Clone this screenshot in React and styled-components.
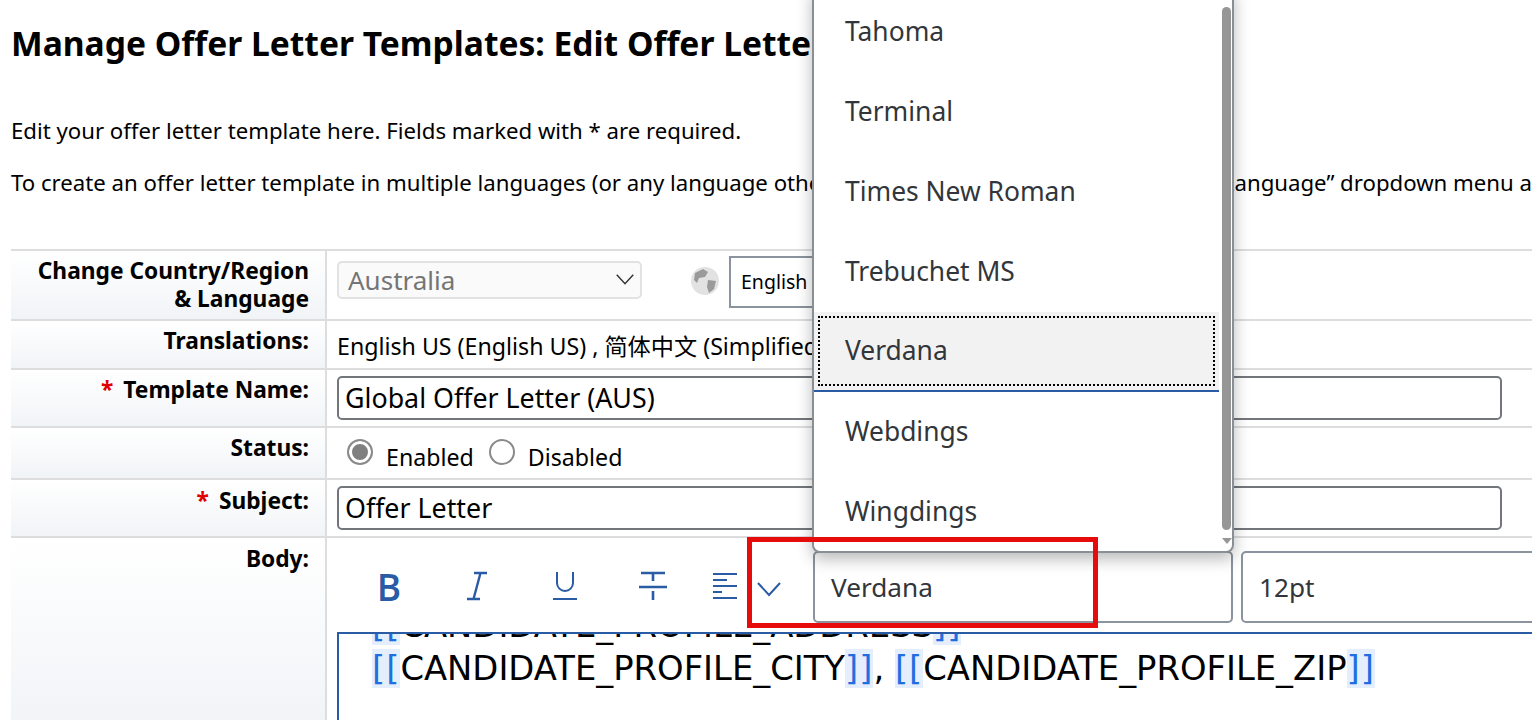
import React from "react";
import styled, { createGlobalStyle } from "styled-components";

const Colors = {
  BLUE: "#2a5ba5",
  LINE: "#dddddd",
  FIELD: "#73777c",
  TEXT: "#32363a",
};

const GlobalStyle = createGlobalStyle`
  html, body { margin: 0; padding: 0; background: #fff; }
  body { font-family: "Noto Sans", "Noto Sans CJK SC", sans-serif; color: #000; }
`;

const Page = styled.div`
  position: relative;
  width: 1532px;
  height: 720px;
  overflow: hidden;
  padding: 0 0 0 11px;
  box-sizing: border-box;
`;

const Title = styled.h1`
  margin: 0;
  padding-top: 21px;
  font-size: 33.6px;
  line-height: 44px;
  font-weight: 700;
  white-space: nowrap;
`;

const Intro = styled.div`
  display: flex;
  justify-content: space-between;
  margin-top: ${(p) => p.$top}px;
  font-size: 22.2px;
  line-height: 30px;
  white-space: nowrap;
`;

const Table = styled.div`
  margin-top: 51px;
  width: 1521px;
`;

const Row = styled.div`
  display: flex;
  height: ${(p) => p.$height}px;
  border-top: 2px solid ${Colors.LINE};
  box-sizing: border-box;
`;

const Label = styled.div`
  flex: 0 0 316px;
  box-sizing: border-box;
  padding: ${(p) => p.$top ?? 5}px 16px 0 0;
  text-align: right;
  font-size: 22.75px;
  line-height: 28px;
  font-weight: 700;
  background: linear-gradient(#fff, #f1f4f7);
  border-right: 2px solid ${Colors.LINE};
`;

const Star = styled.span`
  color: #e00000;
  margin-right: 10px;
`;

const Cell = styled.div`
  flex: 1;
  min-width: 0;
  display: flex;
  align-items: center;
  padding-left: 10px;
  font-size: 23.2px;
  white-space: nowrap;
  overflow: hidden;
`;

const CountrySelect = styled.div`
  width: 305px;
  height: 38px;
  margin-bottom: 11px;
  box-sizing: border-box;
  display: flex;
  align-items: center;
  justify-content: space-between;
  padding: 0 6px 0 9px;
  font-size: 26px;
  color: #757575;
  background: #fafafa;
  border: 2px solid #e2e2e2;
  border-radius: 5px;
`;

const Globe = styled.svg`
  margin: 0 8px 9px 47px;
  flex: none;
`;

const LangSelect = styled.div`
  flex: none;
  width: 300px;
  height: 52px;
  margin-bottom: 7px;
  box-sizing: border-box;
  border: 2px solid #8b939e;
  padding: 0 10px;
  display: flex;
  align-items: center;
  font-size: 19.5px;
`;

const Input = styled.div`
  width: 1165px;
  height: 44px;
  box-sizing: border-box;
  border: 2px solid ${Colors.FIELD};
  border-radius: 5px;
  padding: 0 6px;
  font-size: 26.8px;
  line-height: 40px;
`;

const Radio = styled.span`
  flex: none;
  width: 26px;
  height: 26px;
  box-sizing: border-box;
  border: 2px solid #8a8a8a;
  border-radius: 50%;
  margin: -2px 13px 0 ${(p) => p.$left}px;
  background: ${(p) => (p.$checked ? "#808080" : "#fff")};
  box-shadow: ${(p) => (p.$checked ? "inset 0 0 0 3px #fff" : "none")};
`;

const RadioText = styled.span`
  padding-top: 8px;
`;

const BodyCell = styled.div`
  flex: 1;
  min-width: 0;
  padding-left: 10px;
`;

const Toolbar = styled.div`
  display: flex;
  height: 92px;
  box-sizing: border-box;
  padding-top: 13px;
`;

const Tool = styled.span`
  flex: none;
  width: ${(p) => p.$width}px;
  height: 70px;
  margin-right: ${(p) => p.$gap || 0}px;
  display: flex;
  align-items: center;
  justify-content: center;
  color: ${Colors.BLUE};
`;

const BoldGlyph = styled.span`
  font-size: 37px;
  line-height: 1;
  font-weight: 600;
  font-family: "Open Sans", sans-serif;
`;

const ChevronWrap = styled.span`
  flex: none;
  padding-top: 12px;
`;

const FontSelect = styled.div`
  flex: none;
  width: ${(p) => p.$width}px;
  height: 72px;
  margin-right: 8px;
  box-sizing: border-box;
  display: flex;
  align-items: center;
  padding-left: 16px;
  font-size: 26.2px;
  color: ${Colors.TEXT};
  border: 2px solid #8b939e;
  border-radius: 5px;
`;

const Editor = styled.div`
  height: 100px;
  margin-top: 2px;
  overflow: hidden;
  box-sizing: border-box;
  border-top: 2px solid ${Colors.BLUE};
  border-left: 2px solid ${Colors.BLUE};
  padding-left: 33px;
  font-family: "DejaVu Sans", sans-serif;
  font-size: 33.8px;
  line-height: 43px;
  white-space: nowrap;
`;

const EditorLines = styled.div`
  margin-top: -30px;
`;

const Token = styled.span`
  color: #1f6fe0;
  background: #e4eefd;
  letter-spacing: 1px;
`;

const Dropdown = styled.div`
  position: absolute;
  left: 812px;
  top: -12px;
  width: 422px;
  height: 565px;
  box-sizing: border-box;
  padding-top: 2px;
  display: flex;
  background: #fff;
  border: 2px solid #8a8f96;
  border-radius: 0 0 8px 8px;
  box-shadow: 0 6px 16px rgba(0, 0, 0, 0.28);
  overflow: hidden;
`;

const Options = styled.div`
  flex: none;
  width: 405px;
`;

const Option = styled.div`
  position: relative;
  height: 80px;
  box-sizing: border-box;
  display: flex;
  align-items: center;
  padding: 0 0 3px 31px;
  font-size: 26.4px;
  color: ${Colors.TEXT};
  ${(p) =>
    p.$active &&
    `
    background: #f2f2f2;
    border-bottom: 2px solid ${Colors.BLUE};
    &::after {
      content: "";
      position: absolute;
      inset: 4px;
      border: 2px dotted #000;
    }
  `}
`;

const ScrollTrack = styled.div`
  position: relative;
  flex: 1;
`;

const ScrollThumb = styled.div`
  position: absolute;
  top: 15px;
  left: 3px;
  width: 9px;
  height: 523px;
  background: #969696;
  border-radius: 5px;
`;

const ScrollArrow = styled.div`
  position: absolute;
  bottom: 7px;
  left: 3px;
  border-left: 5px solid transparent;
  border-right: 5px solid transparent;
  border-top: 6px solid #969696;
`;

const Callout = styled.div`
  position: absolute;
  left: 747px;
  top: 537px;
  width: 351px;
  height: 91px;
  box-sizing: border-box;
  border: 5px solid #e60c0c;
`;

const Chevron = ({ size = 24, color = "#32363a", width = 2 }) => (
  <svg width={size} height={size} viewBox="0 0 24 24" fill="none">
    <path d="M1 5l11 12L23 5" stroke={color} strokeWidth={width} />
  </svg>
);

const fonts = ["Tahoma", "Terminal", "Times New Roman", "Trebuchet MS", "Verdana", "Webdings", "Wingdings"];

const App = () => (
  <Page>
    <GlobalStyle />
    <Title>Manage Offer Letter Templates: Edit Offer Letter Template</Title>
    <Intro $top={51}>Edit your offer letter template here. Fields marked with * are required.</Intro>
    <Intro $top={22}>
      <span>To create an offer letter template in multiple languages (or any language other than English), use the</span>
      <span>“Language” dropdown menu a</span>
    </Intro>
    <Table>
      <Row $height={70}>
        <Label $top={6}>
          Change Country/Region
          <br />
          &amp; Language
        </Label>
        <Cell>
          <CountrySelect>
            Australia
            <Chevron size={18} />
          </CountrySelect>
          <Globe width="32" height="28" viewBox="0 0 32 28">
            <circle cx="16" cy="14" r="14" fill="#e2e2e2" />
            <path d="M6 6l8-4 5 3-3 5-6 1-2 5-3-3zM19 13l8 1-2 8-5 4-2-6z" fill="#9a9a9a" />
          </Globe>
          <LangSelect>English US</LangSelect>
        </Cell>
      </Row>
      <Row $height={49}>
        <Label $top={6}>Translations:</Label>
        <Cell>English US (English US) , 简体中文 (Simplified Chinese)</Cell>
      </Row>
      <Row $height={58}>
        <Label $top={6}>
          <Star>*</Star>Template Name:
        </Label>
        <Cell>
          <Input>Global Offer Letter (AUS)</Input>
        </Cell>
      </Row>
      <Row $height={52}>
        <Label $top={6}>Status:</Label>
        <Cell>
          <Radio $left={10} $checked />
          <RadioText>Enabled</RadioText>
          <Radio $left={15} />
          <RadioText>Disabled</RadioText>
        </Cell>
      </Row>
      <Row $height={58}>
        <Label $top={7}>
          <Star>*</Star>Subject:
        </Label>
        <Cell>
          <Input>Offer Letter</Input>
        </Cell>
      </Row>
      <Row $height={190}>
        <Label $top={7}>Body:</Label>
        <BodyCell>
          <Toolbar>
            <Tool $width={104}>
              <BoldGlyph>B</BoldGlyph>
            </Tool>
            <Tool $width={72}>
              <svg width="24" height="30" viewBox="0 0 24 30" fill="none" stroke="currentColor" strokeWidth="2.4">
                <path d="M9 2h13M2 28h13M15.5 2L8.5 28" />
              </svg>
            </Tool>
            <Tool $width={104}>
              <svg width="26" height="30" viewBox="0 0 26 30" fill="none" stroke="currentColor" strokeWidth="2">
                <path d="M5 1v11a8 8 0 0 0 16 0V1M1 28h24" />
              </svg>
            </Tool>
            <Tool $width={72}>
              <svg width="28" height="30" viewBox="0 0 28 30" fill="none" stroke="currentColor" strokeWidth="2.6">
                <path d="M2 2h24M14 2v8M0 16h28M14 20v9" />
              </svg>
            </Tool>
            <Tool $width={72}>
              <svg width="26" height="28" viewBox="0 0 26 28" fill="none" stroke="currentColor" strokeWidth="2">
                <path d="M1 2h24M1 8h14M1 14h24M1 20h9M1 26h24" />
              </svg>
            </Tool>
            <Tool $width={16} $gap={36}>
              <ChevronWrap>
                <Chevron size={24} color={Colors.BLUE} />
              </ChevronWrap>
            </Tool>
            <FontSelect $width={420}>Verdana</FontSelect>
            <FontSelect $width={300}>12pt</FontSelect>
          </Toolbar>
          <Editor>
            <EditorLines>
              <div>
                <Token>[[</Token>CANDIDATE_PROFILE_ADDRESS<Token>]]</Token>
              </div>
              <div>
                <Token>[[</Token>CANDIDATE_PROFILE_CITY<Token>]]</Token>, <Token>[[</Token>CANDIDATE_PROFILE_ZIP
                <Token>]]</Token>
              </div>
            </EditorLines>
          </Editor>
        </BodyCell>
      </Row>
    </Table>
    <Dropdown>
      <Options>
        {fonts.map((name) => (
          <Option key={name} $active={name === "Verdana"}>
            {name}
          </Option>
        ))}
      </Options>
      <ScrollTrack>
        <ScrollThumb />
        <ScrollArrow />
      </ScrollTrack>
    </Dropdown>
    <Callout />
  </Page>
);

export default App;
